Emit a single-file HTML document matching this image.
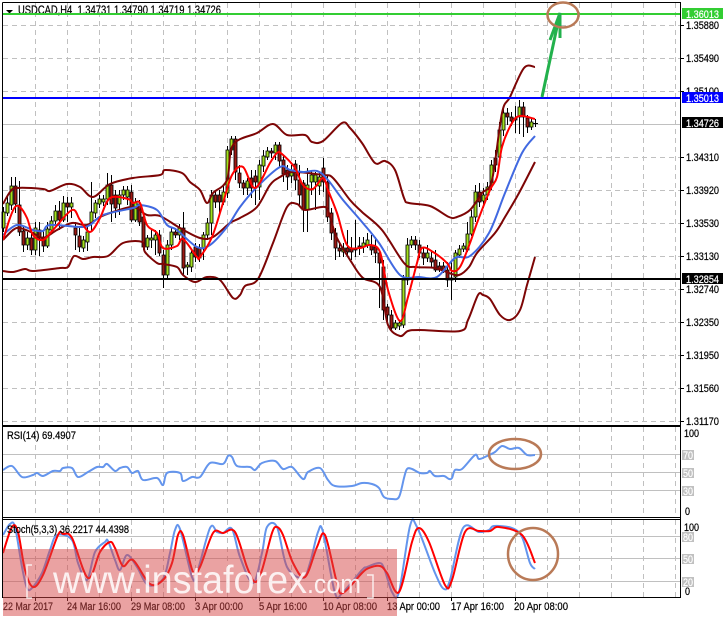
<!DOCTYPE html>
<html><head><meta charset="utf-8"><style>
html,body{margin:0;padding:0;background:#fff;width:723px;height:618px;overflow:hidden}
svg{display:block;position:absolute;left:0;top:0}
text{font-family:"Liberation Sans",sans-serif;font-size:11px;fill:#000;stroke:#000;stroke-width:.22px;white-space:pre}
.l{stroke:#fff;fill:#fff}
.b{fill:none;stroke:#7d0505;stroke-width:2;stroke-linejoin:round}
.w{fill:none;stroke:#000;stroke-width:1}
</style></head><body>
<svg width="723" height="618" viewBox="0 0 723 618" xmlns="http://www.w3.org/2000/svg">
<rect width="723" height="618" fill="#fff"/>
<!-- grid -->
<path shape-rendering="crispEdges" fill="none" stroke="#c0c0c0" stroke-dasharray="5 4" d="M3 25.5H680M3 58.5H680M3 91.5H680M3 157.5H680M3 190.5H680M3 223.5H680M3 256.5H680M3 289.5H680M3 322.5H680M3 355.5H680M3 388.5H680M3 421.5H680
M35.5 3V424M67.5 3V424M99.5 3V424M131.5 3V424M163.5 3V424M195.5 3V424M227.5 3V424M259.5 3V424M291.5 3V424M323.5 3V424M355.5 3V424M387.5 3V424M419.5 3V424M451.5 3V424M483.5 3V424M515.5 3V424M547.5 3V424M579.5 3V424M611.5 3V424M643.5 3V424M675.5 3V424
M35.5 427V517M67.5 427V517M99.5 427V517M131.5 427V517M163.5 427V517M195.5 427V517M227.5 427V517M259.5 427V517M291.5 427V517M323.5 427V517M355.5 427V517M387.5 427V517M419.5 427V517M451.5 427V517M483.5 427V517M515.5 427V517M547.5 427V517M579.5 427V517M611.5 427V517M643.5 427V517M675.5 427V517
M35.5 520V597M67.5 520V597M99.5 520V597M131.5 520V597M163.5 520V597M195.5 520V597M227.5 520V597M259.5 520V597M291.5 520V597M323.5 520V597M355.5 520V597M387.5 520V597M419.5 520V597M451.5 520V597M483.5 520V597M515.5 520V597M547.5 520V597M579.5 520V597M611.5 520V597M643.5 520V597M675.5 520V597"/>
<path shape-rendering="crispEdges" fill="none" stroke="#c0c0c0" d="M3 124.5H680M3 454.5H680M3 472.5H680M3 490.5H680M3 536.5H680M3 558.5H680M3 581.5H680"/>
<!-- title -->
<path d="M6 10h7l-3.5 3.5z" fill="#000"/>
<text x="18" y="14" textLength="203" lengthAdjust="spacingAndGlyphs" style="font-size:12px">USDCAD,H4  1.34731 1.34790 1.34719 1.34726</text>
<!-- candle wicks -->
<path class="w" d="M3.5 207V232M7.5 197V216M11.5 177V210M15.5 177V213M19.5 181V236M23.5 226V252M27.5 232V250M31.5 232V255M35.5 222V255M39.5 222V256M43.5 230V252M47.5 222V248M51.5 216V232M55.5 205V225M59.5 201V230M63.5 196V222M67.5 197V222M71.5 197V218M75.5 222V250M79.5 228V252M83.5 236V252M87.5 225V251M91.5 182V231M95.5 200V218M99.5 195V208M103.5 195V206M107.5 173V205M111.5 175V222M115.5 190V218M119.5 190V215M123.5 186V200M127.5 186V205M131.5 185V222M135.5 198V222M139.5 200V226M143.5 212V250M147.5 235V250M151.5 230V248M155.5 230V255M159.5 230V256M163.5 250V288M167.5 240V278M171.5 227V250M175.5 228V238M179.5 224V240M183.5 212V275M187.5 262V275M191.5 250V272M195.5 243V262M199.5 244V262M203.5 232V260M207.5 218V240M211.5 190V235M215.5 190V208M219.5 190V215M223.5 186V205M227.5 146V198M231.5 136V155M235.5 136V180M239.5 165V188M243.5 180V195M247.5 178V195M251.5 170V198M255.5 170V205M259.5 160V200M263.5 150V172M267.5 147V160M271.5 148V158M275.5 142V160M279.5 142V168M283.5 155V182M287.5 165V190M291.5 165V183M295.5 160V190M299.5 165V205M303.5 180V232M307.5 168V232M311.5 170V195M315.5 172V210M319.5 172V195M323.5 158V192M327.5 175V222M331.5 208V240M335.5 228V260M339.5 243V257M343.5 243V257M347.5 230V256M351.5 237V260M355.5 220V257M359.5 237V255M363.5 237V253M367.5 233V248M371.5 235V255M375.5 237V263M379.5 250V308M383.5 260V320M387.5 304V322M391.5 310V330M395.5 320V330M399.5 320V330M403.5 275V328M407.5 238V285M411.5 236V248M415.5 236V250M419.5 240V258M423.5 248V265M427.5 245V262M431.5 250V268M435.5 250V272M439.5 262V272M443.5 262V273M447.5 262V287M451.5 262V300M455.5 250V282M459.5 245V258M463.5 243V252M467.5 222V252M471.5 210V236M475.5 185V222M479.5 183V207M483.5 188V208M487.5 182V200M491.5 160V190M495.5 150V172M499.5 122V165M503.5 108V136M507.5 108V125M511.5 112V126M515.5 106V133M519.5 100V134M523.5 102V137M527.5 115V133M531.5 118V130M535.5 119V127M533 123.5H538"/>
<!-- green bodies -->
<path fill="#a2e01e" stroke="#000" stroke-width=".85" d="M2 212h3v16h-3zM6 203h3v10h-3zM10 186h3v19h-3zM26 238h3v7h-3zM34 228h3v22h-3zM46 229h3v17h-3zM50 221h3v9h-3zM54 211h3v10h-3zM62 203h3v17h-3zM70 203h3v4h-3zM82 240h3v8h-3zM86 232h3v10h-3zM90 212h3v11h-3zM94 203h3v10h-3zM98 199h3v5h-3zM102 199h3v3h-3zM106 185h3v14h-3zM118 195h3v9h-3zM122 190h3v5h-3zM126 190h3v7h-3zM134 202h3v18h-3zM146 238h3v9h-3zM150 238h3v2h-3zM154 235h3v5h-3zM166 245h3v30h-3zM170 232h3v13h-3zM178 228h3v7h-3zM186 265h3v2h-3zM190 253h3v14h-3zM202 235h3v13h-3zM206 223h3v12h-3zM210 195h3v28h-3zM222 192h3v10h-3zM226 150h3v43h-3zM230 139h3v11h-3zM246 181h3v7h-3zM258 165h3v22h-3zM262 156h3v10h-3zM266 151h3v6h-3zM274 145h3v8h-3zM290 170h3v6h-3zM306 185h3v25h-3zM310 175h3v7h-3zM314 175h3v7h-3zM318 177h3v9h-3zM342 248h3v4h-3zM362 243h3v4h-3zM366 240h3v5h-3zM394 323h3v5h-3zM398 323h3v3h-3zM402 280h3v45h-3zM406 245h3v35h-3zM410 240h3v5h-3zM426 253h3v5h-3zM454 253h3v24h-3zM458 249h3v6h-3zM462 246h3v3h-3zM466 234h3v16h-3zM470 217h3v17h-3zM474 192h3v25h-3zM482 195h3v6h-3zM486 187h3v8h-3zM490 165h3v20h-3zM498 130h3v27h-3zM502 113h3v17h-3zM518 107h3v10h-3zM530 122h3v5h-3z"/>
<!-- red bodies -->
<path fill="#9c1a14" stroke="#000" stroke-width=".85" d="M14 186h3v18h-3zM18 205h3v27h-3zM22 231h3v14h-3zM30 238h3v12h-3zM38 230h3v8h-3zM42 237h3v9h-3zM58 211h3v9h-3zM66 203h3v4h-3zM74 228h3v7h-3zM78 236h3v11h-3zM110 185h3v19h-3zM114 195h3v13h-3zM130 192h3v28h-3zM138 204h3v18h-3zM142 217h3v30h-3zM158 235h3v18h-3zM162 255h3v20h-3zM174 232h3v3h-3zM182 228h3v40h-3zM194 247h3v10h-3zM198 248h3v10h-3zM214 195h3v7h-3zM218 195h3v7h-3zM234 139h3v33h-3zM238 173h3v10h-3zM242 183h3v5h-3zM250 178h3v10h-3zM254 176h3v6h-3zM270 151h3v2h-3zM278 145h3v16h-3zM282 160h3v14h-3zM286 170h3v7h-3zM294 164h3v16h-3zM298 180h3v15h-3zM302 183h3v27h-3zM322 168h3v14h-3zM326 182h3v35h-3zM330 213h3v20h-3zM334 233h3v15h-3zM338 248h3v3h-3zM346 248h3v4h-3zM350 248h3v4h-3zM354 248h3v2h-3zM358 246h3v2h-3zM370 245h3v5h-3zM374 247h3v6h-3zM378 253h3v10h-3zM382 267h3v43h-3zM386 307h3v8h-3zM390 315h3v13h-3zM414 240h3v5h-3zM418 245h3v8h-3zM422 253h3v5h-3zM430 258h3v4h-3zM434 260h3v10h-3zM438 266h3v4h-3zM442 266h3v4h-3zM446 270h3v10h-3zM450 278h3v2h-3zM478 192h3v10h-3zM494 158h3v7h-3zM506 113h3v4h-3zM510 117h3v4h-3zM514 118h3v2h-3zM522 107h3v10h-3zM526 118h3v9h-3z"/>
<!-- bollinger upper -->
<polyline class="b" points="3,204 10,192 17,188 43,189 50,191 67,184 80,187 93,197 110,184 133,178 160,175 165,170 182,173 190,182 200,190 207,203 213,193 227,180 233,145 257,133 273,124 287,135 305,135 312,142 323,141 342,123 350,128 362,143 375,163 385,161 395,170 404,198 409,203 430,206 449,217 457,217 470,210 482,193 492,180 502,113 510,97 524,68 535,67"/>
<!-- bollinger middle -->
<polyline class="b" points="3,240 13,230 20,228 33,233 43,238 57,230 72,223 87,225 100,217 113,212 133,207 147,215 160,216 180,228 200,238 213,237 230,223 240,218 257,207 270,185 280,177 293,172 323,175 333,178 350,200 362,212 382,230 404,263 415,267 435,268 449,273 459,275 469,267 477,253 495,233 505,217 519,193 535,162"/>
<!-- bollinger lower -->
<polyline class="b" points="3,271 13,272 25,269 33,271 60,268 68,267 74,256 83,259 93,257 108,256 123,243 142,242 145,252 157,263 163,264 177,267 183,275 195,282 207,277 220,280 233,298 240,295 245,286 258,279 273,243 287,207 297,204 305,210 325,207 330,217 337,238 352,263 363,278 380,287 388,325 400,336 408,331 420,330 460,331 468,320 478,295 483,295 490,299 500,315 510,320 520,310 527,285 535,257"/>
<!-- blue MA -->
<polyline fill="none" stroke="#4169e1" stroke-width="2" stroke-linejoin="round" points="3,235 17,225 33,230 43,231 50,225 80,227 90,225 103,215 133,208 140,205 157,210 167,225 177,230 197,247 210,245 227,227 240,207 257,187 280,167 290,170 303,172 317,171 328,180 343,200 362,222 379,243 400,275 419,277 437,277 455,258 470,256 489,233 505,193 522,153 535,136"/>
<!-- red MA -->
<polyline fill="none" stroke="#ff0000" stroke-width="2" stroke-linejoin="round" points="3,240 10,218 15,207 20,207 27,218 33,235 43,240 53,230 72,210 80,220 90,232 100,218 110,198 128,199 133,203 140,203 147,225 157,233 163,248 177,246 183,239 197,257 200,257 212,237 223,203 232,175 243,167 255,188 270,163 277,153 282,154 295,168 303,185 313,189 323,178 328,190 337,213 347,245 360,248 370,245 380,252 388,290 400,321 408,297 417,263 422,248 433,252 447,263 452,271 460,267 470,243 477,223 490,190 497,177 502,147 512,123 520,116 535,119"/>
<!-- horizontal levels -->
<rect x="3" y="13" width="677" height="2" fill="#32cd32"/>
<rect x="3" y="97" width="677" height="2" fill="#0000ff"/>
<rect x="3" y="278" width="677" height="2" fill="#000"/>
<!-- RSI -->
<polyline fill="none" stroke="#6495ed" stroke-width="2" stroke-linejoin="round" points="3,470 12,466 22,477 33,475 37,473 43,476 53,471 60,471 63,468 72,468 78,477 88,472 97,467 103,467 107,464 115,471 120,468 127,467 132,473 138,471 143,480 157,478 163,485 167,473 180,473 183,481 192,477 200,477 210,463 223,464 228,456 232,457 237,466 250,467 255,470 262,463 275,461 283,469 292,467 303,479 308,472 320,468 328,480 335,486 352,486 362,483 372,484 379,488 384,497 392,499 399,497 404,478 407,469 412,469 420,473 427,473 430,471 435,476 444,476 449,479 452,478 455,470 462,469 475,455 479,459 487,456 495,452 502,446 510,449 519,448 527,455 535,455"/>
<text x="7" y="439" textLength="69" lengthAdjust="spacingAndGlyphs">RSI(14) 69.4907</text>
<!-- Stoch -->
<polyline fill="none" stroke="#6495ed" stroke-width="2" stroke-linejoin="round" points="3,535 10,524 15,527 22,567 27,588 32,588 42,573 50,550 57,535 72,540 78,563 87,580 95,552 105,542 108,541 115,560 120,570 127,555 137,567 148,585 163,579 170,553 175,530 180,529 192,577 197,573 210,528 217,532 223,533 232,529 240,557 253,583 262,553 267,527 277,527 287,567 303,578 310,563 318,532 323,532 335,593 343,592 362,570 367,567 379,563 384,568 392,592 399,592 410,526 417,527 435,573 444,589 450,580 463,528 479,532 489,530 494,526 512,528 522,537 530,563 535,569"/>
<polyline fill="none" stroke="#ff0000" stroke-width="2" stroke-linejoin="round" points="3,553 12,527 18,532 25,570 33,587 43,575 58,535 63,534 72,538 88,578 100,552 110,542 115,548 123,566 133,560 150,584 163,580 172,563 178,535 183,535 193,572 200,567 213,533 223,533 235,532 247,567 255,582 262,570 272,533 277,527 283,535 293,563 305,577 317,547 325,535 337,583 343,593 362,573 369,568 380,566 387,573 399,592 412,542 419,528 429,542 445,585 452,580 465,532 479,531 490,531 499,527 522,535 535,563"/>
<text x="7" y="533" textLength="122" lengthAdjust="spacingAndGlyphs">Stoch(5,3,3) 36.2217 44.4398</text>
<!-- frames -->
<path shape-rendering="crispEdges" fill="none" stroke="#000" d="M2.5 2.5H680.5V425.5M2.5 2.5V597.5H680.5V426M2 425.5H681M2 426.5H681M2 517.5H681M2 519.5H681"/>
<!-- right axis ticks -->
<path shape-rendering="crispEdges" stroke="#000" d="M680 25.5h4M680 58.5h4M680 91.5h4M680 157.5h4M680 190.5h4M680 223.5h4M680 256.5h4M680 289.5h4M680 322.5h4M680 355.5h4M680 388.5h4M680 421.5h4M35.5 597v4M67.5 597v4M131.5 597v4M195.5 597v4M259.5 597v4M323.5 597v4M387.5 597v4M451.5 597v4M515.5 597v4"/>
<!-- price labels -->
<g>
<text x="686" y="29" textLength="33" lengthAdjust="spacingAndGlyphs">1.35880</text>
<text x="686" y="62" textLength="33" lengthAdjust="spacingAndGlyphs">1.35490</text>
<text x="686" y="95" textLength="33" lengthAdjust="spacingAndGlyphs">1.35100</text>
<text x="686" y="161" textLength="33" lengthAdjust="spacingAndGlyphs">1.34310</text>
<text x="686" y="194" textLength="33" lengthAdjust="spacingAndGlyphs">1.33920</text>
<text x="686" y="227" textLength="33" lengthAdjust="spacingAndGlyphs">1.33530</text>
<text x="686" y="260" textLength="33" lengthAdjust="spacingAndGlyphs">1.33130</text>
<text x="686" y="293" textLength="33" lengthAdjust="spacingAndGlyphs">1.32740</text>
<text x="686" y="326" textLength="33" lengthAdjust="spacingAndGlyphs">1.32350</text>
<text x="686" y="359" textLength="33" lengthAdjust="spacingAndGlyphs">1.31950</text>
<text x="686" y="392" textLength="33" lengthAdjust="spacingAndGlyphs">1.31560</text>
<text x="686" y="425" textLength="33" lengthAdjust="spacingAndGlyphs">1.31170</text>
<rect x="682" y="8" width="41" height="11" fill="#32cd32"/>
<text class="l" x="686" y="18" textLength="33" lengthAdjust="spacingAndGlyphs">1.36013</text>
<rect x="682" y="92" width="41" height="11" fill="#0000ff"/>
<text class="l" x="686" y="102" textLength="33" lengthAdjust="spacingAndGlyphs">1.35013</text>
<rect x="682" y="117" width="41" height="11" fill="#000"/>
<text class="l" x="686" y="127" textLength="33" lengthAdjust="spacingAndGlyphs">1.34726</text>
<rect x="682" y="273" width="41" height="11" fill="#000"/>
<text class="l" x="686" y="283" textLength="33" lengthAdjust="spacingAndGlyphs">1.32854</text>
</g>
<!-- RSI / Stoch axis labels -->
<rect x="682" y="450" width="12" height="10" fill="#c0c0c0"/>
<rect x="682" y="468" width="12" height="10" fill="#c0c0c0"/>
<rect x="682" y="486" width="12" height="10" fill="#c0c0c0"/>
<rect x="682" y="532" width="12" height="10" fill="#c0c0c0"/>
<rect x="682" y="554" width="12" height="10" fill="#c0c0c0"/>
<rect x="682" y="577" width="12" height="10" fill="#c0c0c0"/>
<text x="684" y="437" textLength="15" lengthAdjust="spacingAndGlyphs">100</text>
<text class="l" x="683" y="459" textLength="10" lengthAdjust="spacingAndGlyphs">70</text>
<text class="l" x="683" y="477" textLength="10" lengthAdjust="spacingAndGlyphs">50</text>
<text class="l" x="683" y="495" textLength="10" lengthAdjust="spacingAndGlyphs">30</text>
<text x="685" y="515" textLength="5" lengthAdjust="spacingAndGlyphs">0</text>
<text x="684" y="531" textLength="15" lengthAdjust="spacingAndGlyphs">100</text>
<text class="l" x="683" y="541" textLength="10" lengthAdjust="spacingAndGlyphs">80</text>
<text class="l" x="683" y="563" textLength="10" lengthAdjust="spacingAndGlyphs">50</text>
<text class="l" x="683" y="586" textLength="10" lengthAdjust="spacingAndGlyphs">20</text>
<text x="685" y="595" textLength="5" lengthAdjust="spacingAndGlyphs">0</text>
<!-- time labels -->
<text x="3" y="610" textLength="50" lengthAdjust="spacingAndGlyphs">22 Mar 2017</text>
<text x="67" y="610" textLength="54" lengthAdjust="spacingAndGlyphs">24 Mar 16:00</text>
<text x="131" y="610" textLength="54" lengthAdjust="spacingAndGlyphs">29 Mar 08:00</text>
<text x="195" y="610" textLength="48" lengthAdjust="spacingAndGlyphs">3 Apr 00:00</text>
<text x="259" y="610" textLength="48" lengthAdjust="spacingAndGlyphs">5 Apr 16:00</text>
<text x="323" y="610" textLength="54" lengthAdjust="spacingAndGlyphs">10 Apr 08:00</text>
<text x="387" y="610" textLength="53" lengthAdjust="spacingAndGlyphs">13 Apr 00:00</text>
<text x="451" y="610" textLength="53" lengthAdjust="spacingAndGlyphs">17 Apr 16:00</text>
<text x="514" y="610" textLength="54" lengthAdjust="spacingAndGlyphs">20 Apr 08:00</text>
<!-- arrow + ellipses -->
<path d="M542 97L560 13M550 40L560 13L560 38" fill="none" stroke="#22b14c" stroke-width="3"/>
<ellipse cx="563" cy="15" rx="15.5" ry="12.5" fill="none" stroke="#b97a57" stroke-width="2.5"/>
<ellipse cx="515" cy="454" rx="26" ry="15" fill="none" stroke="#b97a57" stroke-width="2.5"/>
<ellipse cx="533" cy="554" rx="25" ry="26" fill="none" stroke="#b97a57" stroke-width="2.5"/>
<!-- watermark -->
<rect x="3" y="549" width="394" height="67" fill="#d64646" fill-opacity=".5"/>
<g fill="none" stroke="#fff" stroke-opacity=".8" stroke-width="1.5"><path d="M32 565H27V598H32"/><path d="M367 575H373V598H367"/></g>
<text x="53" y="593" textLength="254" lengthAdjust="spacingAndGlyphs" style="font-size:39px;fill:#fff;fill-opacity:.85;stroke:none">www.instaforex</text>
<text x="307" y="593" textLength="54" lengthAdjust="spacingAndGlyphs" style="font-size:27px;fill:#fff;fill-opacity:.85;stroke:none">.com</text>
</svg>
<script>
document.querySelectorAll('polyline').forEach(function(l){
  var n=l.getAttribute('points').trim().split(/\s+/).map(function(s){return s.split(',').map(Number)});
  var d='M'+n[0][0]+' '+n[0][1];
  for(var i=0;i<n.length-1;i++){
    var a=n[i-1]||n[i],b=n[i],c=n[i+1],e=n[i+2]||c;
    d+='C'+(b[0]+(c[0]-a[0])/6).toFixed(1)+' '+(b[1]+(c[1]-a[1])/6).toFixed(1)+' '+(c[0]-(e[0]-b[0])/6).toFixed(1)+' '+(c[1]-(e[1]-b[1])/6).toFixed(1)+' '+c[0]+' '+c[1];
  }
  var p=document.createElementNS('http://www.w3.org/2000/svg','path');
  for(var j=0;j<l.attributes.length;j++){var t=l.attributes[j];if(t.name!=='points')p.setAttribute(t.name,t.value)}
  p.setAttribute('d',d);
  l.parentNode.replaceChild(p,l);
});
</script>
</body></html>
